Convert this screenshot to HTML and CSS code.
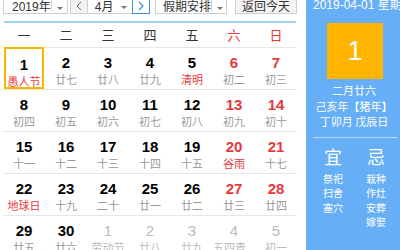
FILE: index.html
```html
<!DOCTYPE html>
<html lang="zh-CN">
  <head>
    <meta charset="UTF-8" />
    <meta name="viewport" content="width=device-width, initial-scale=1.0" />
    <title>万年历</title>
    <link rel="stylesheet" href="styles.css">
  </head>
  <body>
    <div class="calendar">
      <div class="main">
        <div class="toolbar">
          <div class="select year">
            <span class="label">2019年</span>
            <span class="caret"></span>
          </div>
          <div class="month-group">
            <span class="nav">
              <svg width="8" height="10" viewBox="0 0 8 10"><path d="M6 1 L2 5 L6 9" fill="none" stroke="#666" stroke-width="1" /></svg>
            </span>
            <span class="month">4月<span class="arrow"></span></span>
            <span class="nav next">
              <svg width="8" height="10" viewBox="0 0 8 10"><path d="M2 1 L6 5 L2 9" fill="none" stroke="#3d8ee4" stroke-width="1.2" /></svg>
            </span>
          </div>
          <div class="select holiday">
            <span class="label">假期安排</span>
            <span class="caret"></span>
          </div>
          <div class="today">返回今天</div>
        </div>
        <div class="blue-line"></div>

        <div class="weekdays">
          <span>一</span><span>二</span><span>三</span><span>四</span><span>五</span>
          <span class="red">六</span><span class="red">日</span>
        </div>

        <div class="weeks"></div>
      </div>

      <div class="side">
        <div class="date-line">2019-04-01 星期一</div>
        <div class="big-day">1</div>
        <div class="lunar">
          <p>二月廿六</p>
          <p>己亥年【猪年】</p>
          <p>丁卯月 戊辰日</p>
        </div>
        <div class="divider"></div>
        <div class="yiji">
          <div class="col">
            <h3>宜</h3>
            <p>祭祀</p>
            <p>扫舍</p>
            <p>塞穴</p>
          </div>
          <div class="col">
            <h3>忌</h3>
            <p>栽种</p>
            <p>作灶</p>
            <p>安葬</p>
            <p>嫁娶</p>
          </div>
        </div>
      </div>
    </div>

    <script>
      // [day, lunar text, flags]  r = red lunar text, w = weekend, o = other month, s = selected
      const days = [
        [1, "愚人节", "rs"], [2, "廿七"], [3, "廿八"], [4, "廿九"], [5, "清明", "r"], [6, "初二", "w"], [7, "初三", "w"],
        [8, "初四"], [9, "初五"], [10, "初六"], [11, "初七"], [12, "初八"], [13, "初九", "w"], [14, "初十", "w"],
        [15, "十一"], [16, "十二"], [17, "十三"], [18, "十四"], [19, "十五"], [20, "谷雨", "wr"], [21, "十七", "w"],
        [22, "地球日", "r"], [23, "十九"], [24, "二十"], [25, "廿一"], [26, "廿二"], [27, "廿三", "w"], [28, "廿四", "w"],
        [29, "廿五"], [30, "廿六"], [1, "劳动节", "o"], [2, "廿八", "o"], [3, "廿九", "o"], [4, "五四青...", "o"], [5, "初一", "o"]
      ];

      const weeks = document.querySelector(".weeks");
      for (let i = 0; i < days.length; i += 7) {
        let html = "";
        for (let d of days.slice(i, i + 7)) {
          const f = d[2] || "";
          let cls = "day";
          if (f.includes("w")) cls += " weekend";
          if (f.includes("o")) cls += " other";
          if (f.includes("s")) cls += " selected";
          html += `
          <div class="${cls}">
            <span class="num">${d[0]}</span>
            <span class="lun${f.includes("r") ? " red" : ""}">${d[1]}</span>
          </div>`;
        }
        weeks.innerHTML += `<div class="week">${html}</div>`;
      }
    </script>
  </body>
</html>
```

FILE: styles.css
```css
:root {
  --red: #e8383d;
  --blue: #66aef5;
  --gray: #999;
  --light: #bbb;
  --line: #e6e6e6;
}

* {
  box-sizing: border-box;
}

body {
  margin: 0;
  overflow: hidden;
  background: #fff;
  font-family: "Liberation Sans", "Noto Sans CJK SC", sans-serif;
  color: #000;
}

.calendar {
  display: flex;
  margin-top: -8px;
  height: 270px;
}

.main {
  width: 306px;
  flex-shrink: 0;
}

.toolbar {
  display: flex;
  height: 22px;
  padding-left: 3px;
  font-size: 12px;
  color: #333;
  white-space: nowrap;

  > div {
    flex-shrink: 0;
    height: 22px;
    border: 1px solid #cfcfcf;
    display: flex;
    align-items: center;
    padding-top: 4px;
  }
}

.select {
  background: #fff;

  .label {
    padding-left: 8px;
    flex: 1;
  }
  .caret {
    width: 16px;
    flex-shrink: 0;
    height: 100%;
    margin-top: -4px;
    border-left: 1px solid #d6d6d6;
    position: relative;
  }
  .caret::after {
    content: "";
    position: absolute;
    left: 5px;
    top: 12px;
    border: 3px solid transparent;
    border-top: 3px solid #777;
  }
}

.year {
  width: 65px;
}

.month-group {
  width: 80px;
  margin-left: 2px;
  padding-top: 0 !important;
  border: none !important;

  .nav {
    width: 18px;
    height: 22px;
    border: 1px solid #cfcfcf;
    background: #f2f2f2;
    display: flex;
    align-items: center;
    justify-content: center;
    padding-top: 6px;
  }
  .nav.next {
    width: 18px;
    background: #fff;
    border: 1px solid #3d8ee4;
  }
  .month {
    width: 45px;
    height: 22px;
    border-top: 1px solid #cfcfcf;
    border-bottom: 1px solid #cfcfcf;
    background: #fff;
    display: flex;
    align-items: center;
    padding: 4px 0 0 7px;
    position: relative;
  }
  .arrow {
    position: absolute;
    right: 5px;
    top: 13px;
    border: 3px solid transparent;
    border-top: 3px solid #777;
  }
}

.holiday {
  width: 72px;
  margin-left: 5px;

  .label {
    padding-left: 7px;
  }
}

.today {
  width: 62px;
  margin-left: 8px;
  background: #f3f3f3;
  justify-content: center;
}

.blue-line {
  margin: 7px 0 0 4px;
  width: 292px;
  height: 2px;
  background: #a3cff5;
}

.weekdays {
  display: grid;
  grid-template-columns: repeat(7, 42px);
  margin-left: 3px;
  width: 294px;
  height: 25px;
  line-height: 24px;
  border-bottom: 1px solid var(--line);
  text-align: center;
  font-family: "Noto Sans CJK SC", sans-serif;
  font-size: 13px;
  color: #333;

  .red {
    color: var(--red);
  }
}

.weeks {
  margin-left: 3px;
  width: 294px;
}

.week {
  display: grid;
  grid-template-columns: repeat(7, 42px);
  height: 42px;
  border-bottom: 1px solid var(--line);
}

.day {
  display: flex;
  flex-direction: column;
  align-items: center;
  margin: 0 1px;
  padding-top: 6px;
  white-space: nowrap;

  .num {
    font-size: 15px;
    font-weight: bold;
    line-height: 18px;
  }
  .lun {
    font-family: "Noto Sans CJK SC", sans-serif;
    font-size: 11px;
    line-height: 15px;
    color: var(--gray);
  }
  .lun.red {
    color: var(--red);
  }
}

.day.weekend .num {
  color: var(--red);
}

.day.other {
  .num {
    color: var(--light);
    font-weight: normal;
  }
  .lun {
    color: var(--light);
  }
}

.day.selected {
  margin-top: -1px;
  height: 42px;
  padding-top: 7px;
  border: 2px solid #f8b500;
}

.side {
  width: 100px;
  background: var(--blue);
  color: #fff;
  font-family: "Noto Sans CJK SC", sans-serif;
  padding-top: 5px;
}

.date-line {
  font-family: "Liberation Sans", "Noto Sans CJK SC", sans-serif;
  font-size: 12px;
  line-height: 16px;
  padding-left: 7px;
  white-space: nowrap;
}

.big-day {
  width: 56px;
  height: 56px;
  margin: 10px 0 0 21px;
  background: #ffb400;
  font-family: "Liberation Sans", sans-serif;
  font-size: 27px;
  line-height: 56px;
  text-align: center;
}

.lunar {
  width: 96px;
  margin-top: 4px;
  text-align: center;
  font-size: 11px;
  line-height: 15.5px;

  p {
    margin: 0;
  }
}

.divider {
  margin: 7px 0 0 7px;
  width: 84px;
  height: 1px;
  background: rgba(255, 255, 255, 0.55);
}

.yiji {
  display: flex;
  gap: 3px;
  padding-left: 7px;
  margin-top: 8px;

  .col {
    width: 40px;
    text-align: center;
  }
  h3 {
    margin: 0 0 6px;
    font-size: 18px;
    line-height: 20px;
    font-weight: normal;
  }
  p {
    margin: 0;
    font-size: 10px;
    line-height: 14.5px;
  }
}
```
